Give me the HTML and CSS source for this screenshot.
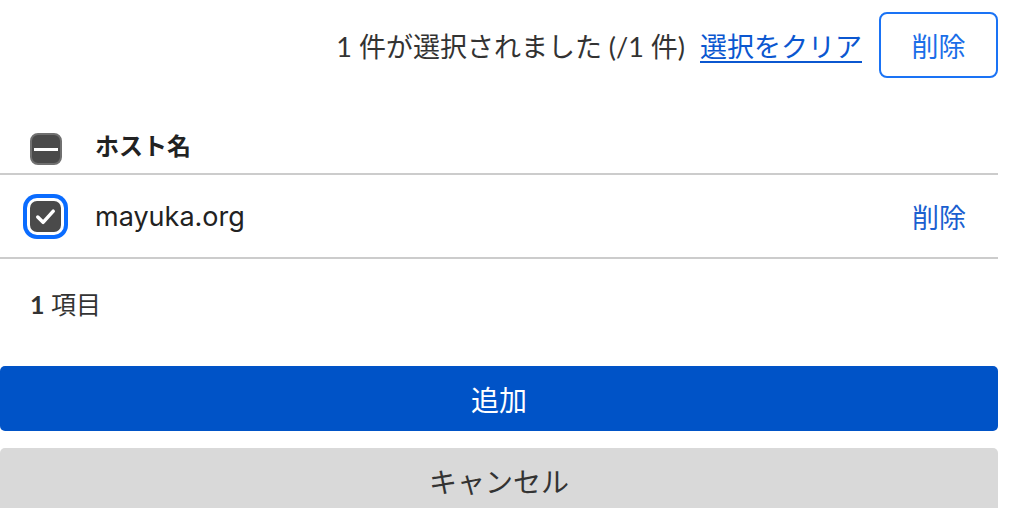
FILE: index.html
```html
<!DOCTYPE html>
<html lang="ja">
<head>
<meta charset="utf-8">
<link rel="stylesheet" href="styles.css">
</head>
<body>
<div class="page">
  <div class="toolbar">
    <span class="status">1 件が選択されました (/1 件)</span>
    <a class="clear-link" href="#">選択をクリア</a>
    <button class="btn-outline">削除</button>
  </div>
  <div class="table">
    <div class="row head">
      <div class="cell-check"><span class="cb cb-mixed"><span class="dash"></span></span></div>
      <div class="cell-name">ホスト名</div>
    </div>
    <div class="row">
      <div class="cell-check"><span class="cb cb-checked cb-focus">
        <svg viewBox="0 0 32 32" width="32" height="32"><path d="M8 16.5 L13.5 22 L24 10.5" fill="none" stroke="#fff" stroke-width="3.6" stroke-linecap="round" stroke-linejoin="round"/></svg>
      </span></div>
      <div class="cell-name host">mayuka.org</div>
      <a class="row-action" href="#">削除</a>
    </div>
  </div>
  <div class="count"><b>1</b> 項目</div>
  <div class="actions">
    <button class="btn-primary">追加</button>
    <button class="btn-secondary">キャンセル</button>
  </div>
</div>
</body>
</html>
```

FILE: styles.css
```css
html, body {
  margin: 0;
  padding: 0;
  background: #fff;
}
body {
  font-family: "Lato", "Noto Sans CJK JP", sans-serif;
  color: #333;
}
.page {
  width: 998px;
}
.toolbar {
  display: flex;
  justify-content: flex-end;
  align-items: center;
  padding-top: 12px;
  height: 66px;
  font-size: 27px;
}
.status {
  color: #333;
  margin-right: 15px;
}
.clear-link {
  color: #0b57d0;
  text-decoration: underline;
  text-underline-offset: 4px;
  text-decoration-thickness: 2px;
  margin-right: 17px;
}
.btn-outline {
  box-sizing: border-box;
  width: 119px;
  height: 66px;
  border: 2px solid #1a73f5;
  border-radius: 8px;
  background: #fff;
  color: #1a6ee8;
  font: inherit;
  font-size: 27px;
  padding: 0;
}
.table {
  margin-top: 49px;
}
.row {
  display: flex;
  align-items: center;
  height: 82px;
  border-bottom: 2px solid #cccccc;
}
.row.head {
  height: 46px;
  align-items: flex-start;
}
.cell-check {
  width: 95px;
  padding-left: 30px;
  box-sizing: border-box;
  display: flex;
}
.cell-name {
  flex: 1;
  font-size: 24px;
  color: #222;
}
.head .cell-name {
  font-weight: 700;
  line-height: 38px;
}
.head .cell-check {
  padding-top: 6px;
}
.host {
  font-family: "Inter", "Noto Sans CJK JP", sans-serif;
  font-size: 27px;
}
.cb {
  box-sizing: border-box;
  width: 32px;
  height: 32px;
  border-radius: 8px;
  background: #4a4a4a;
  display: flex;
  align-items: center;
  justify-content: center;
}
.cb-mixed {
  border: 2px solid #707070;
}
.dash {
  width: 24px;
  height: 3px;
  background: #fff;
}
.cb-checked {
  width: 31px;
  height: 31px;
  border-radius: 7px;
}
.cb-checked svg {
  width: 31px;
  height: 31px;
}
.cb-focus {
  box-shadow: 0 0 0 3px #fff, 0 0 0 7px #0a6cff;
}
.row-action {
  color: #1a5fd0;
  text-decoration: none;
  font-size: 27px;
  margin-right: 32px;
}
.count {
  font-size: 25px;
  color: #333;
  padding-left: 30px;
  height: 90px;
  line-height: 90px;
}
.count b {
  font-weight: 700;
}
.actions {
  display: flex;
  flex-direction: column;
  gap: 17px;
  margin-top: 17px;
}
.btn-primary, .btn-secondary {
  width: 998px;
  height: 65px;
  border: none;
  border-radius: 5px;
  font-family: inherit;
  font-size: 28px;
  padding: 0;
}
.btn-primary {
  background: #0053c7;
  color: #fff;
}
.btn-secondary {
  background: #d9d9d9;
  color: #333;
}
```
